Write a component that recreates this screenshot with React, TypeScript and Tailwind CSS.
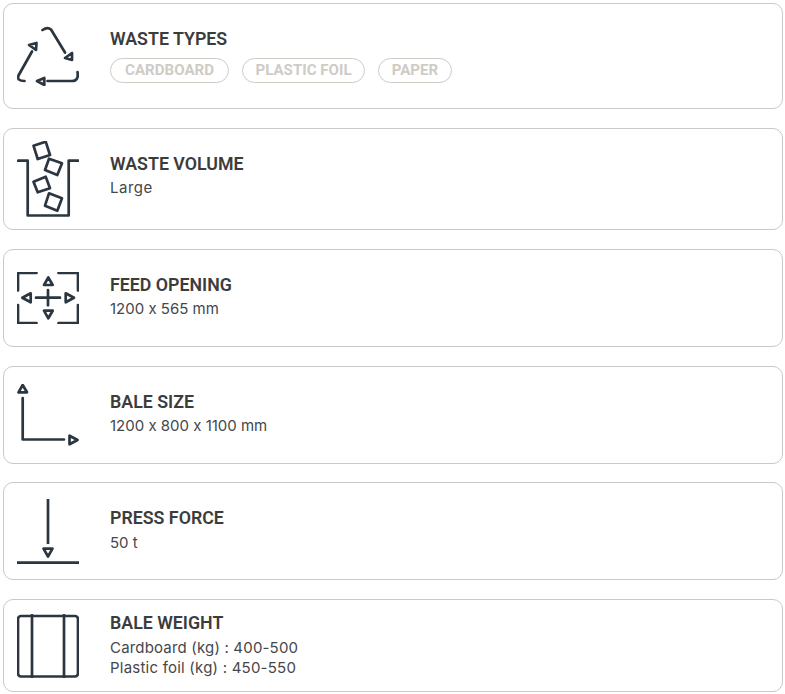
import React from 'react';

const iconInk = '#2b3640';

function Recycle() {
  return (
    <svg width="62" height="60" viewBox="17 25 62 60" fill="none" stroke={iconInk} strokeWidth="2.7" strokeLinecap="round" strokeLinejoin="round">
      <path d="M42.5 29 Q47.5 25.5 51 28.5 L65 51.5" />
      <path d="M65 57 L72 52 L72 59 Z" />
      <path d="M32 50.5 L18.5 74.5 Q16.5 80 24.5 80" />
      <path d="M29 44 L36.5 42 L36 49 Z" />
      <path d="M47.5 80 L72 80 Q79 80 77.5 71" />
      <path d="M37 80 L44.3 77 L44.3 84 Z" />
    </svg>
  );
}

function Bucket() {
  return (
    <svg width="62" height="76" viewBox="17 141 62 76" fill="none" stroke={iconInk} strokeWidth="2.7" strokeLinecap="round" strokeLinejoin="round">
      <path d="M18 160.7 L27.7 160.7 L27.7 215.5 L68.7 215.5 L68.7 160.7 L78.3 160.7" />
      <path d="M33.5 145.7 L45.7 141.7 L50 155 L37.7 159 Z" />
      <path d="M49 158.7 L62 163.3 L57.3 175 L45 170 Z" />
      <path d="M33.5 181.7 L45.7 176.7 L50 188.3 L37.7 192.3 Z" />
      <path d="M49 193.3 L62 198.3 L57.3 210.7 L45 205.7 Z" />
    </svg>
  );
}

function Opening() {
  return (
    <svg width="62" height="52" viewBox="17 272 62 52" fill="none" stroke={iconInk} strokeWidth="2.7" strokeLinecap="round" strokeLinejoin="round">
      <path d="M18 290.5 L18 273 L36.5 273" />
      <path d="M58.5 273 L78 273 L78 290.5" />
      <path d="M18 305 L18 323 L36.5 323" />
      <path d="M58.5 323 L78 323 L78 305" />
      <path d="M48.3 277.5 L44 285 L52.7 285 Z" />
      <path d="M22.3 297.7 L30.7 293.3 L30.7 302.3 Z" />
      <path d="M74 297.7 L65.7 293.3 L65.7 302.3 Z" />
      <path d="M44 310.7 L52.7 310.7 L48.3 318.3 Z" />
      <path d="M36 297.7 L60 297.7" />
      <path d="M48 290 L48 305.3" />
    </svg>
  );
}

function BaleSize() {
  return (
    <svg width="62" height="62" viewBox="17 384 62 62" fill="none" stroke={iconInk} strokeWidth="2.7" strokeLinecap="round" strokeLinejoin="round">
      <path d="M22.7 398 L22.7 439.5 L64 439.5" />
      <path d="M22.7 385 L18.5 392.3 L27 392.3 Z" />
      <path d="M69.5 435.7 L69.5 444.3 L77.5 440 Z" />
    </svg>
  );
}

function PressForce() {
  return (
    <svg width="62" height="66" viewBox="17 498 62 66" fill="none" stroke={iconInk} strokeWidth="2.7" strokeLinejoin="round">
      <path d="M48 499 L48 544" />
      <path d="M43.5 548.7 L52.5 548.7 L48 556.5 Z" />
      <path d="M17 562.7 L79 562.7" />
    </svg>
  );
}

function BaleWeight() {
  return (
    <svg width="62" height="64" viewBox="17 613 62 64" fill="none" stroke={iconInk} strokeWidth="2.7" strokeLinecap="round">
      <rect x="18" y="615" width="60" height="60.5" rx="3" />
      <path d="M32 614 L32 676.5" />
      <path d="M64 614 L64 676.5" />
    </svg>
  );
}

function Spec({ icon, title, size, textClass, children }: { icon: React.ReactNode; title: string; size: string; textClass: string; children: React.ReactNode }) {
  return (
    <div className={`flex items-center border border-[#cbc9c5] rounded-[10px] bg-white pl-[13px] ${size}`}>
      <div className="w-[62px] shrink-0 flex justify-center">{icon}</div>
      <div className={`ml-[31px] min-w-0 ${textClass}`}>
        <h3 className="font-['Roboto',sans-serif] font-semibold text-[17.8px] leading-[24px] text-[#3c3c3b]">{title}</h3>
        {children}
      </div>
    </div>
  );
}

function Pill({ label, width }: { label: string; width: string }) {
  return (
    <span className={`h-[25px] flex items-center justify-center border border-[#cfcbc5] rounded-full font-['Roboto',sans-serif] font-bold text-[15.1px] text-[#cfcbc5] ${width}`}>
      {label}
    </span>
  );
}

function Value({ tracking, children }: { tracking?: string; children: React.ReactNode }) {
  return <p className={`font-['Inter',sans-serif] [font-feature-settings:'calt'_0] text-[15px] leading-[20px] text-[#45474a] ${tracking ?? ''}`}>{children}</p>;
}

export default function App() {
  return (
    <div className="w-[785px] h-[694px] overflow-hidden bg-white pl-[3px] pr-[2px] pt-[3px] flex flex-col">
      <Spec icon={<Recycle />} title="WASTE TYPES" size="h-[106px]" textClass="pb-[3px]">
        <div className="flex gap-[13px] mt-[7px]">
          <Pill label="CARDBOARD" width="w-[119px]" />
          <Pill label="PLASTIC FOIL" width="w-[123px]" />
          <Pill label="PAPER" width="w-[74px]" />
        </div>
      </Spec>
      <Spec icon={<Bucket />} title="WASTE VOLUME" size="h-[102px] mt-[19px]" textClass="pb-[8px]">
        <div className="mt-[2px]"><Value tracking="tracking-[0.5px]">Large</Value></div>
      </Spec>
      <Spec icon={<Opening />} title="FEED OPENING" size="h-[98px] mt-[19px]" textClass="pb-[5px]">
        <div className="mt-[2px]"><Value>1200 x 565 mm</Value></div>
      </Spec>
      <Spec icon={<BaleSize />} title="BALE SIZE" size="h-[98px] mt-[19px]" textClass="pb-[5px]">
        <div className="mt-[2px]"><Value>1200 x 800 x 1100 mm</Value></div>
      </Spec>
      <Spec icon={<PressForce />} title="PRESS FORCE" size="h-[98px] mt-[18px]" textClass="pb-[4px]">
        <div className="mt-[3px]"><Value>50 t</Value></div>
      </Spec>
      <Spec icon={<BaleWeight />} title="BALE WEIGHT" size="h-[93px] mt-[19px]" textClass="pb-[3px]">
        <div className="mt-[3px]">
          <Value tracking="tracking-[0.18px]">Cardboard (kg) : 400-500</Value>
          <Value tracking="tracking-[0.22px]">Plastic foil (kg) : 450-550</Value>
        </div>
      </Spec>
    </div>
  );
}
